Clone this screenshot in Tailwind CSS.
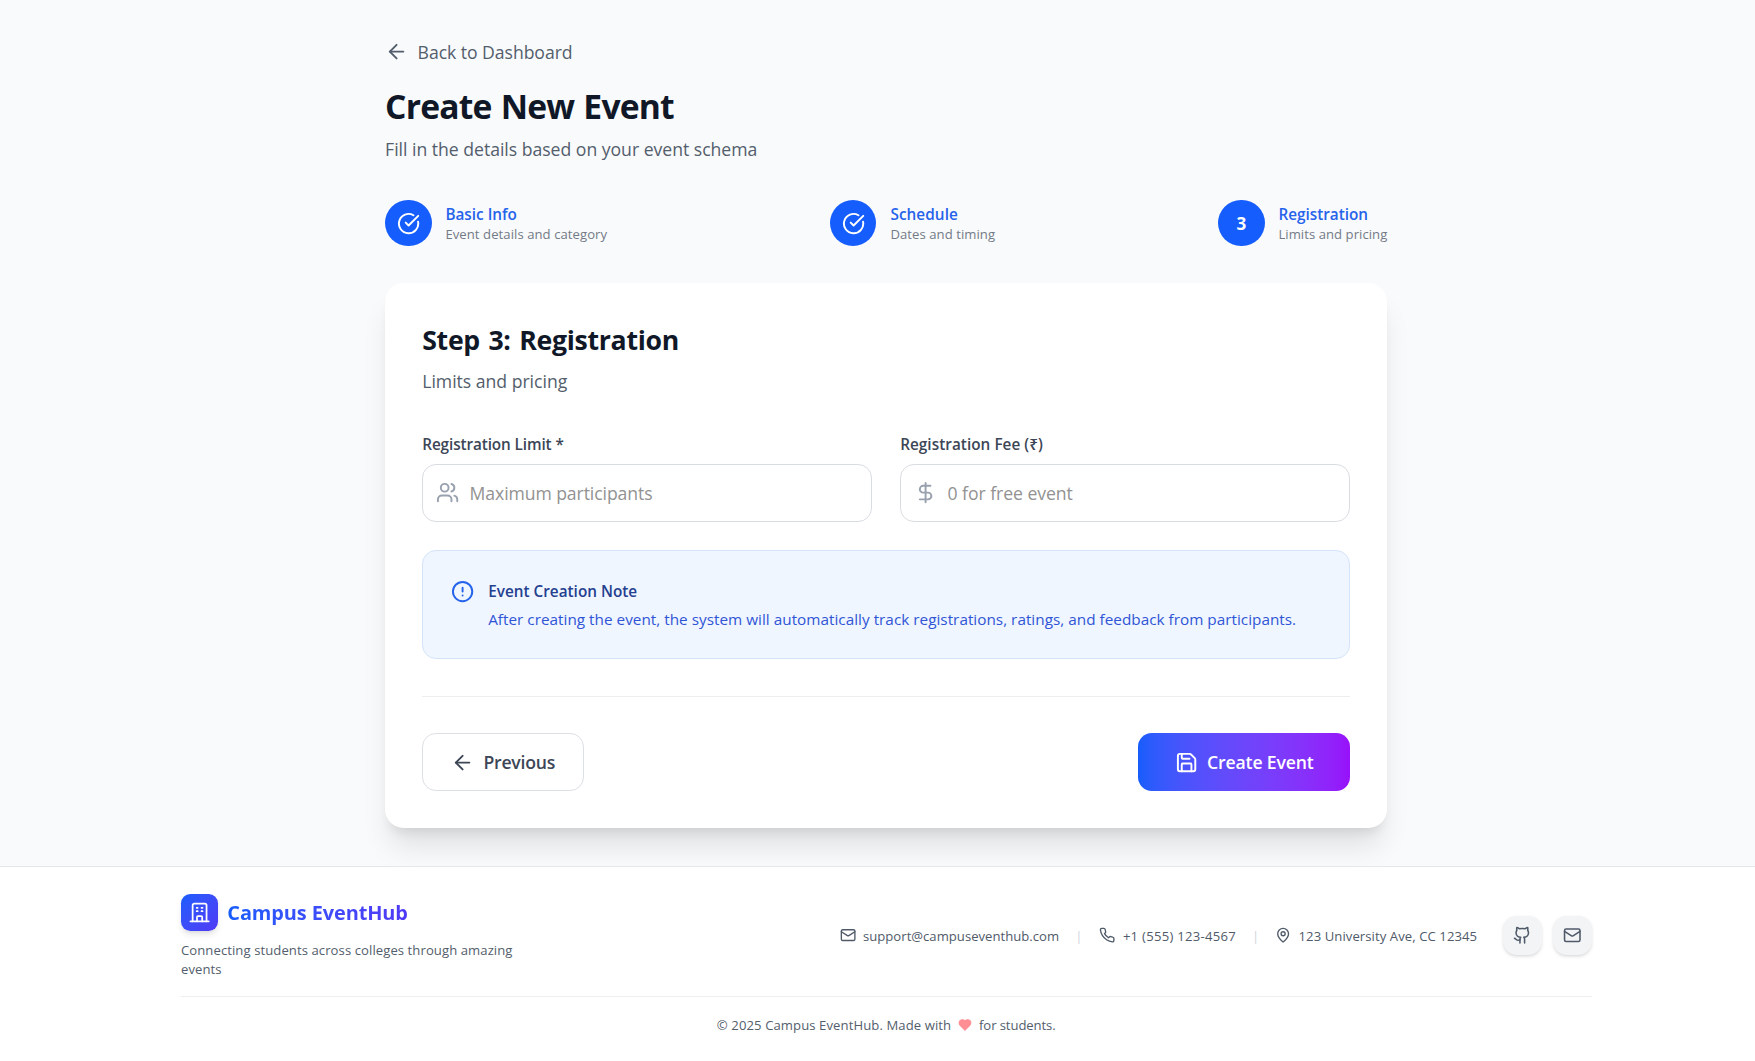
<!DOCTYPE html>
<html lang="en">
<head>
<meta charset="utf-8">
<title>Create New Event</title>
<script src="https://cdn.jsdelivr.net/npm/@tailwindcss/browser@4"></script>
</head>
<body class="overflow-hidden bg-white font-['Open_Sans','Noto_Sans',sans-serif]">
<div class="w-[1528px] [zoom:1.16]">

  <main class="bg-[#f9fafc] pt-8 pb-8">
    <div class="mx-auto w-[864px]">

      <!-- Page header -->
      <a href="#" class="mb-4 flex h-6 items-center gap-2 text-[#535e6c]">
        <svg class="mt-px size-5" viewBox="0 0 24 24" fill="none" stroke="currentColor" stroke-width="2" stroke-linecap="round" stroke-linejoin="round"><path d="m12 19-7-7 7-7"/><path d="M19 12H5"/></svg>
        <span class="pt-[3px] text-[15.2px] leading-6 tracking-[-0.003em]">Back to Dashboard</span>
      </a>
      <h1 class="h-9 pt-0.5 text-[29px] leading-9 font-bold tracking-[-0.024em] [word-spacing:0.035em] text-[#101828]">Create New Event</h1>
      <p class="mt-2 h-6 pt-px text-[15.2px] leading-6 tracking-[-0.0013em] text-[#535e6c]">Fill in the details based on your event schema</p>

      <!-- Step indicator -->
      <ol class="mt-[32.4px] flex items-center justify-between">
        <li class="flex items-center gap-3">
          <span class="flex size-10 items-center justify-center rounded-full bg-[#155dfc] text-white">
            <svg class="size-5" viewBox="0 0 24 24" fill="none" stroke="currentColor" stroke-width="2" stroke-linecap="round" stroke-linejoin="round"><path d="M21.801 10A10 10 0 1 1 17 3.335"/><path d="m9 11 3 3L22 4"/></svg>
          </span>
          <div>
            <div class="h-5 pt-px text-[13.2px] leading-5 font-semibold text-[#2563eb]">Basic Info</div>
            <div class="h-4 text-[11.3px] leading-4 tracking-[0.005em] text-[#737a86]">Event details and category</div>
          </div>
        </li>
        <li class="flex items-center gap-3">
          <span class="flex size-10 items-center justify-center rounded-full bg-[#155dfc] text-white">
            <svg class="size-5" viewBox="0 0 24 24" fill="none" stroke="currentColor" stroke-width="2" stroke-linecap="round" stroke-linejoin="round"><path d="M21.801 10A10 10 0 1 1 17 3.335"/><path d="m9 11 3 3L22 4"/></svg>
          </span>
          <div>
            <div class="h-5 pt-px text-[13.2px] leading-5 font-semibold tracking-[0.005em] text-[#2563eb]">Schedule</div>
            <div class="h-4 text-[11.3px] leading-4 tracking-[0.005em] text-[#737a86]">Dates and timing</div>
          </div>
        </li>
        <li class="flex items-center gap-3">
          <span class="flex size-10 items-center justify-center rounded-full bg-[#155dfc] pt-px text-[14.8px] font-bold text-white">3</span>
          <div>
            <div class="h-5 pt-px text-[13.2px] leading-5 font-semibold text-[#2563eb]">Registration</div>
            <div class="h-4 text-[11.3px] leading-4 tracking-[0.004em] text-[#737a86]">Limits and pricing</div>
          </div>
        </li>
      </ol>

      <!-- Form card -->
      <section class="mt-[31.6px] h-[470.3px] rounded-2xl bg-white p-8 shadow-xl">
        <h2 class="h-8 pt-px text-[23px] leading-8 font-bold tracking-[-0.011em] [word-spacing:0.07em] text-[#101828]">Step 3: Registration</h2>
        <p class="mt-2 h-6 pt-px text-[15.2px] leading-6 tracking-[-0.001em] text-[#535e6c]">Limits and pricing</p>

        <div class="mt-8 grid grid-cols-2 gap-6">
          <div>
            <label for="limit" class="mb-2 block h-5 pt-[1.5px] text-[13.2px] leading-5 font-semibold tracking-[-0.0065em] text-[#3c4656]">Registration Limit *</label>
            <div class="flex h-[50px] items-center gap-[9px] rounded-xl border border-[#d9dce1] px-[11px] text-[#99a1af]">
              <svg class="size-5 shrink-0" viewBox="0 0 24 24" fill="none" stroke="currentColor" stroke-width="2" stroke-linecap="round" stroke-linejoin="round"><path d="M16 21v-2a4 4 0 0 0-4-4H6a4 4 0 0 0-4 4v2"/><path d="M16 3.128a4 4 0 0 1 0 7.744"/><path d="M22 21v-2a4 4 0 0 0-3-3.870"/><circle cx="9" cy="7" r="4"/></svg>
              <input id="limit" placeholder="Maximum participants" class="h-7 min-w-0 flex-1 pt-px text-[15.2px] leading-6 tracking-[-0.0055em] placeholder:text-[#929292]">
            </div>
          </div>
          <div>
            <label for="fee" class="mb-2 block h-5 pt-[1.5px] text-[13.2px] leading-5 font-semibold tracking-[0.003em] text-[#3c4656]">Registration Fee (₹)</label>
            <div class="flex h-[50px] items-center gap-[9px] rounded-xl border border-[#d9dce1] px-[11px] text-[#99a1af]">
              <svg class="size-5 shrink-0" viewBox="0 0 24 24" fill="none" stroke="currentColor" stroke-width="2" stroke-linecap="round" stroke-linejoin="round"><path d="M12 2v20"/><path d="M17 5H9.500a3.500 3.500 0 0 0 0 7h5a3.500 3.500 0 0 1 0 7H6"/></svg>
              <input id="fee" placeholder="0 for free event" class="h-7 min-w-0 flex-1 pt-px text-[15.2px] leading-6 tracking-[-0.003em] placeholder:text-[#929292]">
            </div>
          </div>
        </div>

        <div class="mt-6 flex h-[94px] gap-3 rounded-xl border border-[#d3e4f8] bg-[#eff6ff] p-6">
          <svg class="mt-[1.5px] size-5 shrink-0 text-[#2563eb]" viewBox="0 0 24 24" fill="none" stroke="currentColor" stroke-width="2" stroke-linecap="round" stroke-linejoin="round"><circle cx="12" cy="12" r="10"/><path d="M12 8v4"/><path d="M12 16h.01"/></svg>
          <div>
            <h3 class="h-5 pt-px text-[13.2px] leading-5 font-semibold tracking-[0.001em] text-[#24408f]">Event Creation Note</h3>
            <p class="mt-1 h-5 pt-[1.4px] text-[13.2px] leading-5 tracking-[0.001em] whitespace-nowrap text-[#2f55d6]">After creating the event, the system will automatically track registrations, ratings, and feedback from participants.</p>
          </div>
        </div>

        <div class="mt-8 flex justify-between border-t border-[#eceef0] pt-[31.4px]">
          <button class="flex h-[50px] w-[139.4px] items-center justify-center gap-2 rounded-xl border border-[#dcdfe4] text-[#3c4656]">
            <svg class="size-5" viewBox="0 0 24 24" fill="none" stroke="currentColor" stroke-width="2" stroke-linecap="round" stroke-linejoin="round"><path d="m12 19-7-7 7-7"/><path d="M19 12H5"/></svg>
            <span class="pt-0.5 text-[15.2px] leading-6 font-semibold tracking-[-0.012em]">Previous</span>
          </button>
          <button class="flex h-[50px] w-[183px] items-center justify-center gap-2 rounded-xl bg-linear-to-r from-[#155dfc] to-[#9810fa] text-white">
            <svg class="size-5" viewBox="0 0 24 24" fill="none" stroke="currentColor" stroke-width="2" stroke-linecap="round" stroke-linejoin="round"><path d="M15.2 3a2 2 0 0 1 1.4.6l3.8 3.8a2 2 0 0 1 .6 1.4V19a2 2 0 0 1-2 2H5a2 2 0 0 1-2-2V5a2 2 0 0 1 2-2z"/><path d="M17 21v-7a1 1 0 0 0-1-1H8a1 1 0 0 0-1 1v7"/><path d="M7 3v4a1 1 0 0 0 1 1h7"/></svg>
            <span class="pt-0.5 text-[15.2px] leading-6 font-semibold tracking-[-0.009em]">Create Event</span>
          </button>
        </div>
      </section>
    </div>
  </main>

  <!-- Footer -->
  <footer class="relative border-t border-[#e5e7eb] bg-white pt-[23.4px] pb-6">
    <div class="mx-auto w-[1216px]">
      <div class="flex items-center justify-between">
        <div>
          <div class="flex items-center gap-2">
            <span class="flex size-8 items-center justify-center rounded-lg bg-linear-to-br from-[#155dfc] to-[#4f39f6] text-white shadow-md">
              <svg class="size-5" viewBox="0 0 24 24" fill="none" stroke="currentColor" stroke-width="1.8" stroke-linecap="round" stroke-linejoin="round"><path d="M2.5 21h19"/><path d="M4.8 21V4.5a1.7 1.7 0 0 1 1.7-1.7h11a1.7 1.7 0 0 1 1.7 1.7V21"/><path d="M9 7h1M9 10.5h1M14 7h1M14 10.5h1"/><path d="M9.3 21v-4.3a1 1 0 0 1 1-1h3.4a1 1 0 0 1 1 1V21"/></svg>
            </span>
            <span class="bg-linear-to-r from-[#155dfc] to-[#4f39f6] bg-clip-text pt-px text-[17.2px] leading-7 font-bold tracking-[-0.0055em] text-transparent">Campus EventHub</span>
          </div>
          <p class="mt-2 h-8 pt-[0.8px] text-[11.3px] leading-4 tracking-[0.006em] text-[#535e6c]">Connecting students across colleges through amazing<br>events</p>
        </div>
        <div class="flex items-center gap-[22.6px] text-[#4f5a69]">
          <div class="flex items-center gap-4 text-[11.3px] leading-4">
            <span class="flex items-center gap-1.5">
              <svg class="size-3.5" viewBox="0 0 24 24" fill="none" stroke="currentColor" stroke-width="2" stroke-linecap="round" stroke-linejoin="round"><path d="m22 7-8.991 5.727a2 2 0 0 1-2.009 0L2 7"/><rect x="2" y="4" width="20" height="16" rx="2"/></svg>
              <span class="pt-px tracking-[0.0015em]">support@campuseventhub.com</span>
            </span>
            <span class="flex w-0.5 justify-center pt-px text-[#d1d5dc]">|</span>
            <span class="flex items-center gap-2">
              <svg class="size-3.5" viewBox="0 0 24 24" fill="none" stroke="currentColor" stroke-width="2" stroke-linecap="round" stroke-linejoin="round"><path d="M22 16.92v3a2 2 0 0 1-2.18 2 19.79 19.79 0 0 1-8.63-3.07 19.5 19.5 0 0 1-6-6 19.79 19.79 0 0 1-3.07-8.67A2 2 0 0 1 4.11 2h3a2 2 0 0 1 2 1.72 12.84 12.84 0 0 0 .7 2.81 2 2 0 0 1-.45 2.11L8.09 9.91a16 16 0 0 0 6 6l1.27-1.27a2 2 0 0 1 2.11-.45 12.84 12.84 0 0 0 2.81.7A2 2 0 0 1 22 16.92z"/></svg>
              <span class="-ml-px pt-px tracking-[0.02em]">+1 (555) 123-4567</span>
            </span>
            <span class="flex w-0.5 justify-center pt-px text-[#d1d5dc]">|</span>
            <span class="flex items-center gap-1.5">
              <svg class="size-3.5" viewBox="0 0 24 24" fill="none" stroke="currentColor" stroke-width="2" stroke-linecap="round" stroke-linejoin="round"><path d="M20 10c0 4.993-5.539 10.193-7.399 11.799a1 1 0 0 1-1.202 0C9.539 20.193 4 14.993 4 10a8 8 0 0 1 16 0"/><circle cx="12" cy="10" r="3"/></svg>
              <span class="pt-px tracking-[0.006em]">123 University Ave, CC 12345</span>
            </span>
          </div>
          <div class="flex items-center gap-[10px]">
            <a href="#" class="flex size-[33px] items-center justify-center rounded-xl bg-[#f3f4f6] shadow-sm">
              <svg class="size-4" viewBox="0 0 24 24" fill="none" stroke="currentColor" stroke-width="2" stroke-linecap="round" stroke-linejoin="round"><path d="M15 22v-4a4.8 4.8 0 0 0-1-3.5c3 0 6-2 6-5.5.08-1.25-.27-2.48-1-3.5.28-1.15.28-2.35 0-3.5 0 0-1 0-3 1.5-2.64-.5-5.36-.5-8 0C6 2 5 2 5 2c-.3 1.15-.3 2.35 0 3.5A5.403 5.403 0 0 0 4 9c0 3.5 3 5.5 6 5.5-.39.49-.68 1.05-.85 1.65-.17.6-.22 1.23-.15 1.85v4"/><path d="M9 18c-4.51 2-5-2-7-2"/></svg>
            </a>
            <a href="#" class="flex size-[33px] items-center justify-center rounded-xl bg-[#f3f4f6] shadow-sm">
              <svg class="size-4" viewBox="0 0 24 24" fill="none" stroke="currentColor" stroke-width="2" stroke-linecap="round" stroke-linejoin="round"><path d="m22 7-8.991 5.727a2 2 0 0 1-2.009 0L2 7"/><rect x="2" y="4" width="20" height="16" rx="2"/></svg>
            </a>
          </div>
        </div>
      </div>
      <div class="mt-[16.4px] flex items-center justify-center border-t border-[#eceef0] pt-4 text-[11.3px] leading-4 text-[#535e6c]">
        <span class="tracking-[0.007em]">© 2025 Campus EventHub. Made with</span>
        <svg class="mx-1.5 size-3 text-[#ff8f94]" viewBox="0 0 24 24" fill="currentColor" stroke="currentColor" stroke-width="2" stroke-linejoin="round"><path d="M19 14c1.490-1.460 3-3.210 3-5.500A5.500 5.500 0 0 0 16.500 3c-1.760 0-3 .5-4.500 2-1.500-1.500-2.740-2-4.500-2A5.500 5.500 0 0 0 2 8.500c0 2.300 1.500 4.050 3 5.500l7 7Z"/></svg>
        <span class="tracking-[-0.007em]">for students.</span>
      </div>
    </div>
  </footer>
</div>
</body>
</html>
